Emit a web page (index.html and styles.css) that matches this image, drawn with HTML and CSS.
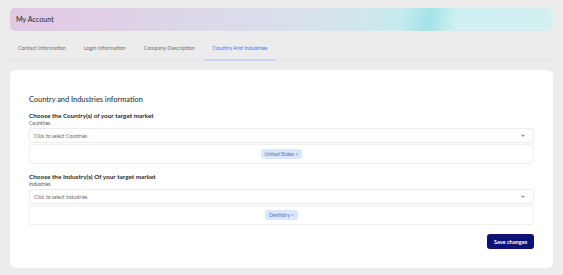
FILE: index.html
```html
<!DOCTYPE html>
<html lang="en">
<head>
    <meta charset="UTF-8">
    <meta name="viewport" content="width=device-width, initial-scale=1.0">
    <title>My Account</title>
    <link rel="stylesheet" href="styles.css">
</head>
<body>
    <!-- Page header -->
    <header class="page_header">
        <h1>My Account</h1>
    </header>

    <!-- Tabs -->
    <nav class="tabs">
        <a class="tab">Contact Information</a>
        <a class="tab">Login Information</a>
        <a class="tab">Company Description</a>
        <a class="tab active">Country And Industries</a>
    </nav>

    <!-- Main card -->
    <section class="card">
        <h2 class="card_title">Country and Industries information</h2>

        <div class="field">
            <h3 class="field_title">Choose the Country(s) of your target market</h3>
            <label class="field_label">Countries</label>
            <div class="select_box">
                <span>Click to select Countries</span>
                <svg class="chevron" viewBox="0 0 10 6" width="4" height="3"><path d="M1 1l4 4 4-4" fill="none" stroke="#333" stroke-width="2"/></svg>
            </div>
            <div class="tag_box">
                <span class="tag">United States <span class="tag_x">&times;</span></span>
            </div>
        </div>

        <div class="field">
            <h3 class="field_title">Choose the Industry(s) Of your target market</h3>
            <label class="field_label">Industries</label>
            <div class="select_box">
                <span>Click to select Industries</span>
                <svg class="chevron" viewBox="0 0 10 6" width="4" height="3"><path d="M1 1l4 4 4-4" fill="none" stroke="#333" stroke-width="2"/></svg>
            </div>
            <div class="tag_box">
                <span class="tag">Dentistry <span class="tag_x">&times;</span></span>
            </div>
        </div>

        <div class="actions">
            <button class="save_button">Save changes</button>
        </div>
    </section>
</body>
</html>
```

FILE: styles.css
```css
body {
    font-family: Lato, "Open Sans", sans-serif;
    background-color: #ececec;
    color: #2b2b2b;
    margin: 0;
    padding: 8px 10px 0 10px;
}

.page_header {
    height: 23px;
    border-radius: 5px;
    background: linear-gradient(100deg, #e3c8e3 0%, #dcd8ea 35%, #d6e4ec 60%, #c6ebee 72%, #a3e3e8 77%, #d0f0f1 82%, #d4f0f1 100%);
    display: flex;
    align-items: center;
    padding: 0 6px;
}

.page_header h1 {
    margin: 0;
    font-size: 7.2px;
    font-weight: 400;
    color: #2a2a2a;
}

.tabs {
    display: flex;
    margin-top: 5px;
    border-bottom: 1px solid #e2e2e2;
}

.tab {
    font-size: 5.4px;
    color: #707070;
    padding: 9px 8px 8px 8px;
    margin-right: 2px;
    border-bottom: 2px solid transparent;
    margin-bottom: -1px;
}

.tab.active {
    color: #4f6fe0;
    border-bottom-color: #c9d2ee;
}

.card {
    background-color: #ffffff;
    border-radius: 6px;
    margin-top: 9px;
    padding: 25px 19px 19px 19px;
}

.card_title {
    margin: 0 0 8px 0;
    font-size: 7.4px;
    font-weight: 500;
    color: #333;
}

.field {
    margin-bottom: 9px;
}

.field_title {
    margin: 0;
    font-size: 6.4px;
    font-weight: 700;
    color: #2b2b2b;
}

.field_label {
    display: block;
    font-size: 5px;
    color: #555;
    margin: 1px 0 2px 0;
}

.select_box {
    height: 13px;
    border: 1px solid #ececec;
    border-radius: 3px;
    display: flex;
    align-items: center;
    justify-content: space-between;
    padding: 0 8px 0 4px;
    font-size: 5px;
    color: #666;
}

.chevron {
    display: block;
}

.tag_box {
    height: 18px;
    margin-top: 1px;
    border: 1px solid #f0f0f0;
    border-radius: 3px;
    display: flex;
    align-items: center;
    justify-content: center;
}

.tag {
    background-color: #dae7fb;
    color: #5a6fb8;
    font-size: 5px;
    border-radius: 3px;
    padding: 2px 4px;
}

.tag_x {
    color: #6a8be8;
}

.actions {
    display: flex;
    justify-content: flex-end;
    margin-top: 0;
}

.save_button {
    background-color: #0b1272;
    color: #ffffff;
    font-family: Lato, sans-serif;
    font-weight: 700;
    font-size: 5.6px;
    border: none;
    border-radius: 3px;
    width: 47px;
    height: 15px;
    padding: 0;
}
```
